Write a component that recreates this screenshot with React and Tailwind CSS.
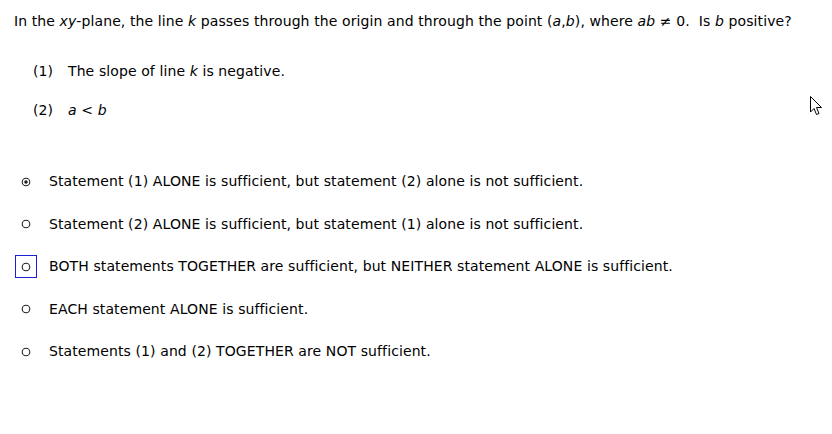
import React from "react";

function Radio({ checked }) {
  return (
    <svg width="10" height="10" viewBox="0 0 10 10" className="shrink-0">
      <circle cx="5" cy="5" r="3.8" fill="white" stroke="#222" strokeWidth="1.1" />
      {checked && <circle cx="5" cy="5" r="1.8" fill="#222" />}
    </svg>
  );
}

const options = [
  { text: "Statement (1) ALONE is sufficient, but statement (2) alone is not sufficient.", checked: true },
  { text: "Statement (2) ALONE is sufficient, but statement (1) alone is not sufficient." },
  { text: "BOTH statements TOGETHER are sufficient, but NEITHER statement ALONE is sufficient.", focus: true },
  { text: "EACH statement ALONE is sufficient." },
  { text: "Statements (1) and (2) TOGETHER are NOT sufficient." },
];

export default function App() {
  return (
    <div
      className="relative w-[832px] h-[434px] bg-white text-black text-[14px] leading-[17px] tracking-[0.1px]"
      style={{ fontFamily: '"DejaVu Sans", sans-serif' }}
    >
      <div className="pt-[13px] pl-[14px]">
        In the <i>xy</i>-plane, the line <i>k</i> passes through the origin and through the point (<i>a</i>,<i>b</i>), where <i>ab</i> &ne; 0.&nbsp; Is <i>b</i> positive?
      </div>
      <div className="pl-[33px] pt-[33px] flex flex-col gap-[22px]">
        <div className="flex">
          <span className="w-[35px]">(1)</span>
          <span>The slope of line <i>k</i> is negative.</span>
        </div>
        <div className="flex">
          <span className="w-[35px]">(2)</span>
          <span><i>a</i> &lt; <i>b</i></span>
        </div>
      </div>
      <div className="pt-[51px] flex flex-col gap-[19.5px]">
        {options.map((o, i) => (
          <div key={i} className="flex items-center">
            <div className="w-[49px] flex justify-center pl-[3px]">
              <div
                className={
                  "w-[22px] h-[23px] flex items-center justify-center border " +
                  (o.focus ? "border-[#1f1fd6]" : "border-transparent")
                }
              >
                <Radio checked={o.checked} />
              </div>
            </div>
            <span>{o.text}</span>
          </div>
        ))}
      </div>
      <svg className="absolute left-[810px] top-[96px]" width="13" height="21" viewBox="0 0 13 21">
        <path d="M0.5 0.5 L0.5 16 L4 12.5 L6.5 18.5 L9 17.5 L6.5 11.5 L11.5 11.5 Z" fill="white" stroke="black" strokeWidth="1" />
      </svg>
    </div>
  );
}
